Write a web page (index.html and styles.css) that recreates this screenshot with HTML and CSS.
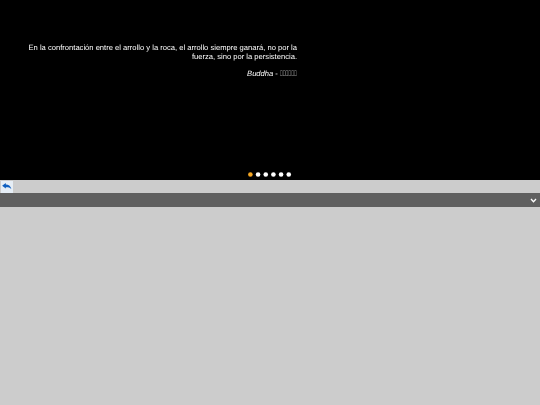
FILE: index.html
```
<!DOCTYPE html>
<html lang="es">
<head>
<meta charset="utf-8">
<title>Cita</title>
<link rel="stylesheet" href="styles.css">
</head>
<body>
<section class="stage">
  <div class="quote">
    <p class="text">En la confrontación entre el arrollo y la roca, el arrollo siempre ganará, no por la fuerza, sino por la persistencia.</p>
    <p class="author"><em>Buddha</em> - <span class="glyphs">&#xE000;&#xE001;&#xE002;&#xE003;&#xE004;&#xE005;</span></p>
  </div>
  <svg class="dots" viewBox="0 0 44 5" width="44" height="5">
    <circle class="dot active" cx="2.4" cy="2.5" r="2.3"/>
    <circle class="dot" cx="10.07" cy="2.5" r="2.3"/>
    <circle class="dot" cx="17.74" cy="2.5" r="2.3"/>
    <circle class="dot" cx="25.41" cy="2.5" r="2.3"/>
    <circle class="dot" cx="33.08" cy="2.5" r="2.3"/>
    <circle class="dot" cx="40.75" cy="2.5" r="2.3"/>
  </svg>
</section>
<div class="toolbar">
  <button class="back" aria-label="Volver">
    <svg viewBox="0 0 10 7" width="9.5" height="6.5"><path d="M0 3 L4 0 V1.6 C7 1.6 9 3 10 6.5 C8.5 5 7 4.6 4 4.6 V6 Z" fill="#0f5fc0"/></svg>
  </button>
</div>
<div class="bar">
  <svg class="chev" viewBox="0 0 8 6" width="7" height="5"><path d="M1 1.2 L4 4.4 L7 1.2" fill="none" stroke="#fff" stroke-width="1.6"/></svg>
</div>
<main class="content"></main>
</body>
</html>
```
FILE: styles.css
```
html, body {
  margin: 0;
  height: 100%;
}
body {
  display: flex;
  flex-direction: column;
  background: #cccccc;
  font-family: "Liberation Sans", Arial, sans-serif;
  overflow: hidden;
}
.stage {
  height: 180px;
  flex: none;
  background: #000;
  color: #fff;
  display: flex;
  flex-direction: column;
  justify-content: space-between;
  padding: 43px 0 3.5px;
  box-sizing: border-box;
}
.quote {
  width: 272px;
  margin-left: 25px;
  text-align: right;
  font-size: 7.6px;
  line-height: 9px;
  text-rendering: geometricPrecision;
  filter: blur(0.3px);
}
.text, .author {
  margin: 0;
}
.author {
  margin-top: 8px;
  line-height: 10px;
}
.glyphs {
  display: inline-block;
  width: 17px;
  white-space: nowrap;
  text-align: left;
  transform: scaleX(0.49);
  transform-origin: left center;
}
.dots {
  display: block;
  flex: none;
  margin-left: 248.2px;
}
.dot {
  fill: #fff;
}
.dot.active {
  fill: #f5a623;
}
.toolbar {
  height: 13px;
  flex: none;
  background: #cccccc;
  display: flex;
  align-items: center;
}
.back {
  width: 12px;
  height: 12px;
  margin-left: 1px;
  padding: 0;
  border: 0;
  background: #e6eef6;
  display: flex;
  align-items: center;
  justify-content: center;
}
.bar {
  height: 14px;
  flex: none;
  background: #5f5f5f;
  display: flex;
  align-items: center;
  justify-content: flex-end;
  padding-right: 3px;
}
.content {
  flex: 1;
  background: #cccccc;
}
```
